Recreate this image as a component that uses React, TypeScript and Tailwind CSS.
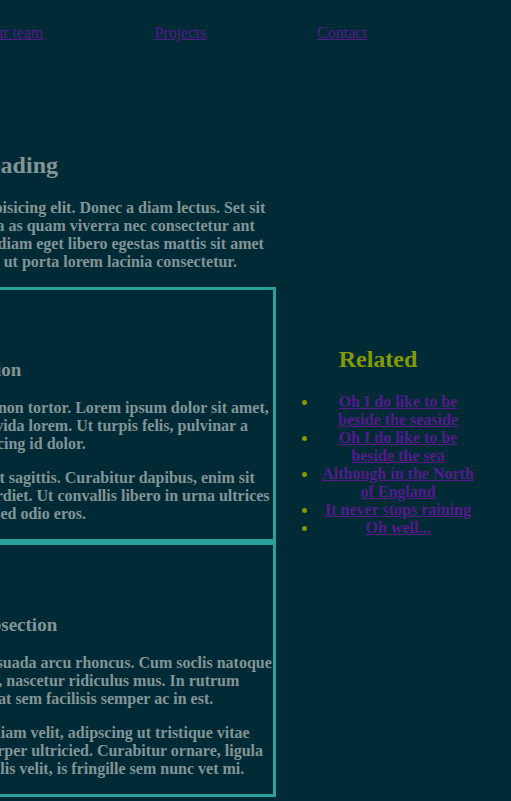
const navigation = ["Home", "Our team", "Projects", "Contact"];

const related = [
  "Oh I do like to be beside the seaside",
  "Oh I do like to be beside the sea",
  "Although in the North of England",
  "It never stops raining",
  "Oh well...",
];

const sections = [
  {
    title: "subsection",
    paragraphs: [
      "Donec ut librero sed accu vehicula ultricies a non tortor. Lorem ipsum dolor sit amet, consectetur adipisicing elit. Aenean ut gravida lorem. Ut turpis felis, pulvinar a semper sed, adipiscing id dolor.",
      "Pelientesque auctor nisi id magna consequat sagittis. Curabitur dapibus, enim sit amet elit pharetra tincidunt feugiat nist imperdiet. Ut convallis libero in urna ultrices accumsan. Donec sed odio eros.",
    ],
  },
  {
    title: "Another subsection",
    paragraphs: [
      "Donec viverra mi quis quam pulvinar at malesuada arcu rhoncus. Cum soclis natoque penatibus et manis dis parturient montes, nascetur ridiculus mus. In rutrum accumsan ultricies. Mauris vitae nisi at sem facilisis semper ac in est.",
      "Vivamus fermentum semper porta. Nunc diam velit, adipscing ut tristique vitae sagittis vel odio. Maecenas convallis ullamcorper ultricied. Curabitur ornare, ligula semper consectetur sagittis, nisi diam iaculis velit, is fringille sem nunc vet mi.",
    ],
  },
];

function SectionBlock({ title, paragraphs }: { title: string; paragraphs: string[] }) {
  return (
    <section className="border-[3px] border-[#2aa198] pt-[69px] pb-4">
      <h3 className="mb-[18px] text-[19px] leading-[22px]">{title}</h3>
      <div className="flex flex-col gap-4">
        {paragraphs.map((text) => (
          <p key={text}>{text}</p>
        ))}
      </div>
    </section>
  );
}

export default function App() {
  return (
    <div className="flex min-h-screen justify-end overflow-hidden bg-[#002b36] pr-[33px] font-['Liberation_Serif',serif] text-base leading-[18px] text-[#839496]">
      <div className="w-[796px] shrink-0 pb-1">
        <nav className="pt-6 pl-10">
          <ul className="flex justify-evenly">
            {navigation.map((label) => (
              <li key={label}>
                <a href="#" className="text-[#551a8b] underline">{label}</a>
              </li>
            ))}
          </ul>
        </nav>
        <div className="mt-[109px] flex gap-[2px] text-center font-bold">
          <main className="min-w-0 flex-1">
            <article>
              <h2 className="mb-5 text-2xl leading-7">Article heading</h2>
              <p className="mb-4">
                Lorem ipsum dolor sit amet, consectetur adipisicing elit. Donec a diam lectus. Set sit amet
                ipsum mauris. Maecenas congue ligula as quam viverra nec consectetur ant hendrerit. Donec et
                mollis dolor. Praesent et diam eget libero egestas mattis sit amet vitae augue. Nam tincidunt
                congue enim, ut porta lorem lacinia consectetur.
              </p>
              {sections.map((section) => (
                <SectionBlock key={section.title} {...section} />
              ))}
            </article>
          </main>
          <aside className="w-[200px] pt-[194px] text-[#859900]">
            <h2 className="mb-5 text-2xl leading-7">Related</h2>
            <ul className="list-disc pl-10">
              {related.map((label) => (
                <li key={label}>
                  <a href="#" className="text-[#551a8b] underline">{label}</a>
                </li>
              ))}
            </ul>
          </aside>
        </div>
      </div>
    </div>
  );
}
